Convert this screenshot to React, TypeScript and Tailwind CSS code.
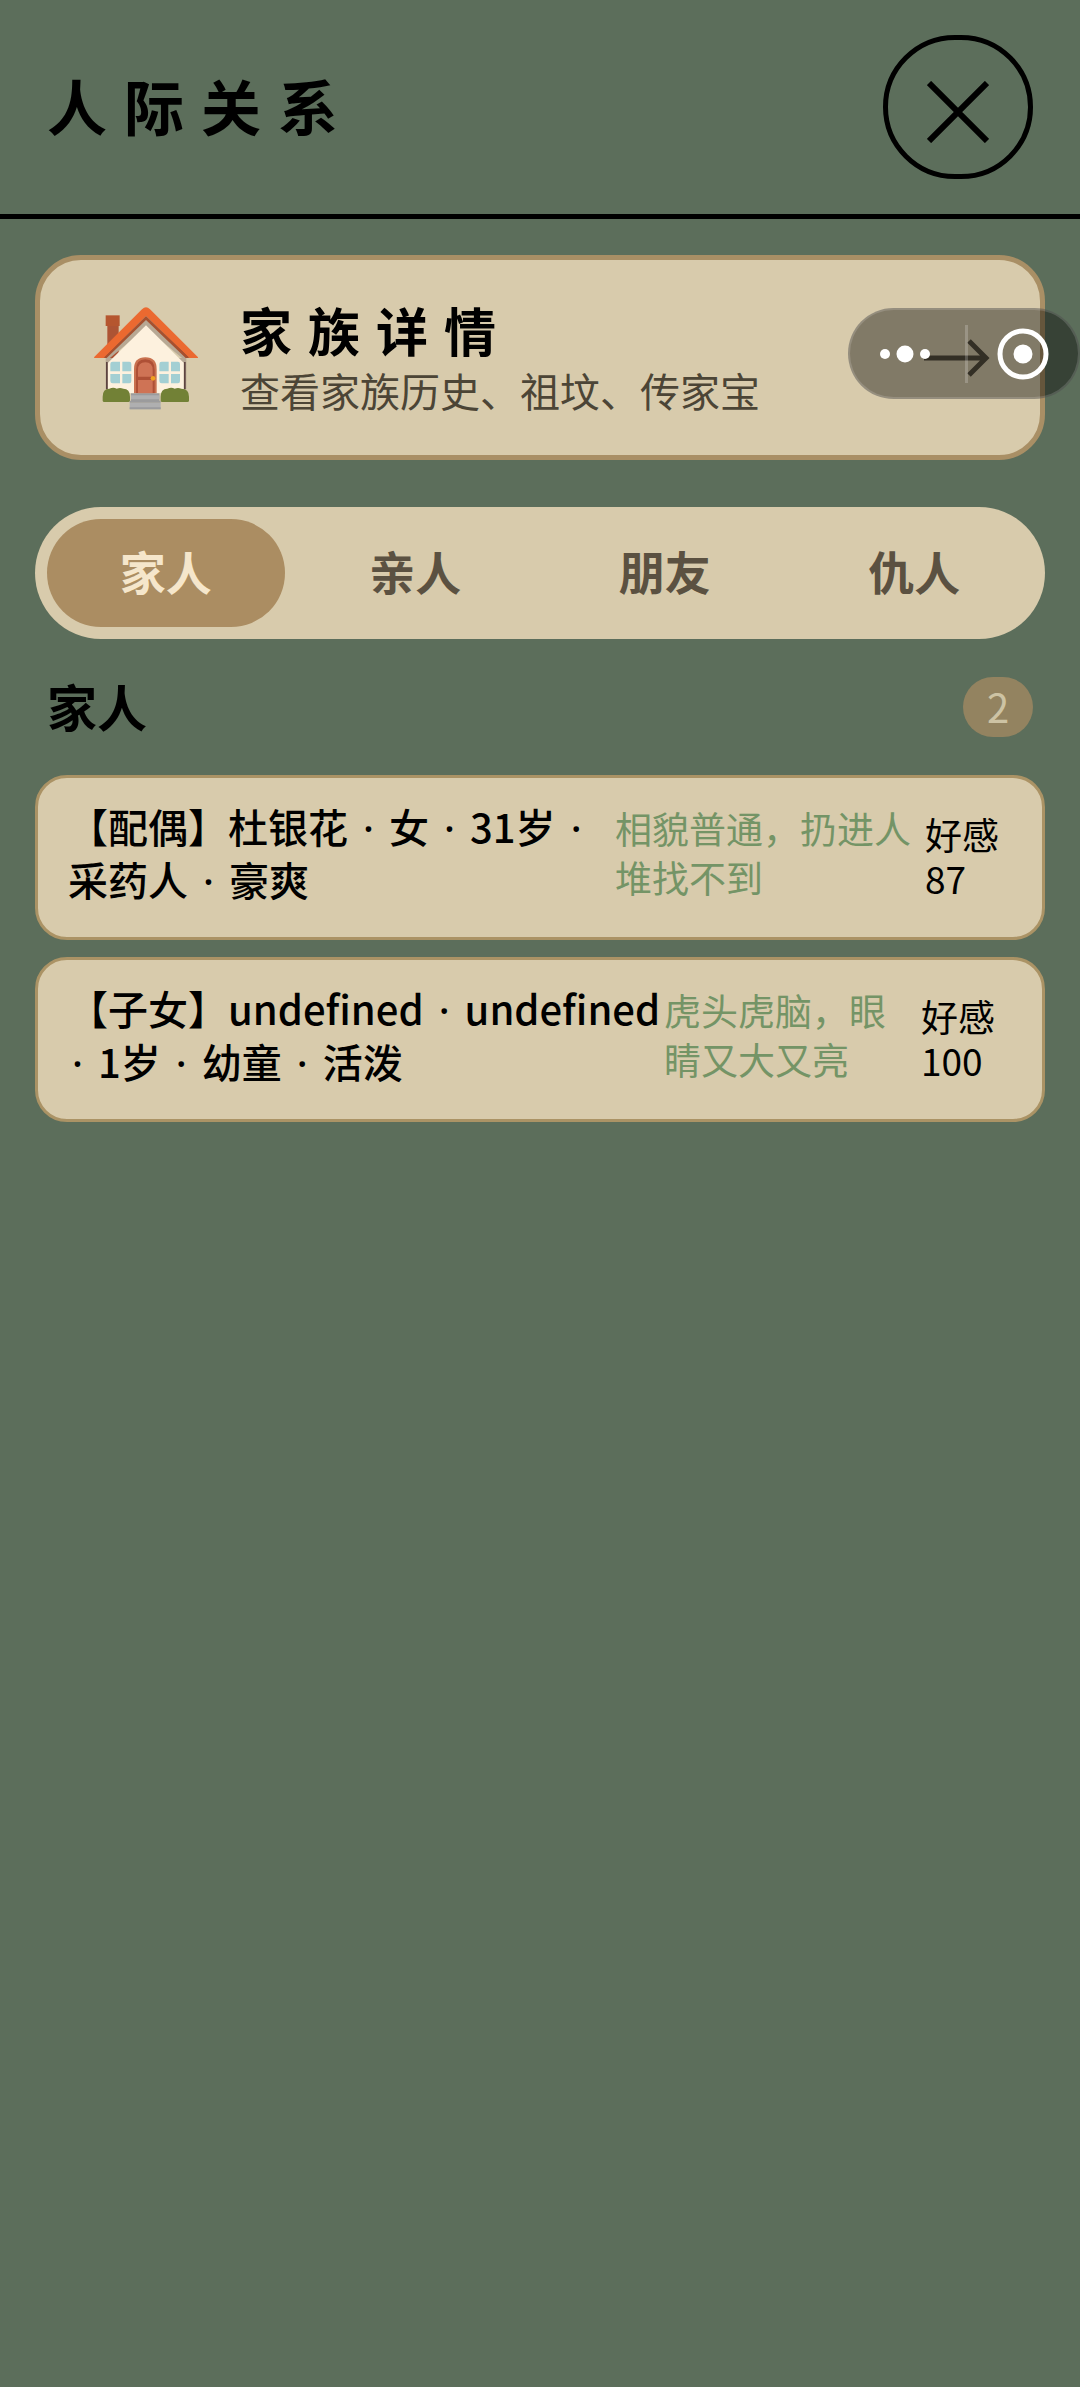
import React, { Fragment, useState } from "react";

type Person = {
  id: number;
  lines: string[][];
  look: string;
  favor: number;
  columns: string;
};

const tabs = ["家人", "亲人", "朋友", "仇人"];

const people: Person[] = [
  {
    id: 1,
    lines: [
      ["【配偶】杜银花", "女", "31岁", ""],
      ["采药人", "豪爽"],
    ],
    look: "相貌普通，扔进人堆找不到",
    favor: 87,
    columns: "grid-cols-[547fr_310fr_87fr]",
  },
  {
    id: 2,
    lines: [
      ["【子女】undefined", "undefined"],
      ["", "1岁", "幼童", "活泼"],
    ],
    look: "虎头虎脑，眼睛又大又亮",
    favor: 100,
    columns: "grid-cols-[596fr_257fr_91fr]",
  },
];

const HouseIcon: React.FC = () => (
  <svg viewBox="42 50 312 312" className="size-[104px] shrink-0" aria-hidden="true">
    {/* chimney */}
    <path d="M82 106h34v100H82z" fill="#ad5434" />
    <path d="M77 78h42v32H77z" fill="#b5562f" />
    {/* walls */}
    <path d="M77 206h242v94H77z" fill="#b7a894" />
    <path d="M78 218h5v82h-5zM312 218h5v82h-5z" fill="#5d4340" />
    <path d="M198 82 78 196v20l120-100 120 100v-20z" fill="#b7a894" />
    <path d="M198 108 84 220v92h227v-92z" fill="#fdf1de" />
    {/* roof */}
    <path d="M198 74 318 200v4h14L198 66 64 204h14z" fill="#a5482c" />
    <path
      d="M42 204 186 60q12-12 24 0l144 144q1 2-2 2h-24L198 80 72 206H44q-2 0-2-2z"
      fill="#eb6930"
    />
    <path d="M198 80 328 206h-11L198 92 80 206h-9z" fill="#a5502f" />
    {/* windows */}
    <g fill="#a3cfd3">
      <path d="M98 217h22v29H91v-22q0-7 7-7zM127 217h21q6 0 6 7v22h-27zM91 254h29v28H98q-7 0-7-7zM127 254h27v21q0 7-6 7h-21z" />
      <path d="M245 217h21v29h-28v-22q0-7 7-7zM273 217h21q6 0 6 7v22h-27zM238 254h28v28h-21q-7 0-7-7zM273 254h27v21q0 7-6 7h-21z" />
    </g>
    {/* door */}
    <path d="M162 312v-73q0-35 34-35t34 35v73z" fill="#c9714f" />
    <path d="M168 312v-70q0-32 28-32t28 32v70z" fill="#ae5036" />
    <path d="M174 262v-20q0-23 22-23t22 23v20zM174 272h44v40h-44z" fill="#cf7355" />
    <circle cx="219" cy="267" r="7" fill="#f0a01f" />
    {/* bushes and steps */}
    <path
      d="M68 334v-12q0-24 20-24 12-5 22 0 10-4 20 0 20 0 20 24v12q0 4-5 4H73q-5 0-5-4zM242 334v-12q0-24 20-24 12-5 22 0 10-4 20 0 23 0 23 24v12q0 4-5 4h-75q-5 0-5-4z"
      fill="#728136"
    />
    <path d="M153 312h85v24h-85z" fill="#9b9b9d" />
    <path d="M153 318h85v12h-85zM149 340h93v20h-93z" fill="#afafb0" />
    <path d="M149 334h93v6h-93zM149 354h93v6h-93z" fill="#9b9b9d" />
  </svg>
);

// Floating mini program menu, sits above the page content
const Capsule: React.FC = () => (
  <div className="absolute top-[308px] right-0 flex h-[91px] w-[232px] items-center rounded-full border-2 border-white/15 bg-black/40">
    <button type="button" aria-label="更多" className="flex h-full flex-1 items-center justify-center pr-1">
      <svg viewBox="0 0 52 20" className="h-5 w-[52px]" fill="#fff">
        <circle cx="6" cy="10" r="5" />
        <circle cx="26" cy="10" r="8.5" />
        <circle cx="46" cy="10" r="5" />
      </svg>
    </button>
    <span className="h-[58px] w-[3px] bg-white/20" />
    <button type="button" aria-label="关闭小程序" className="flex h-full flex-1 items-center justify-center">
      <svg viewBox="0 0 52 52" className="size-[52px]">
        <circle cx="26" cy="26" r="23" fill="none" stroke="#fff" strokeWidth="5" />
        <circle cx="26" cy="26" r="9.5" fill="#fff" />
      </svg>
    </button>
  </div>
);

const Dot: React.FC<{ leading?: boolean }> = ({ leading }) => (
  <span
    className={`mr-[11px] inline-block w-[19px] text-center font-['Noto_Sans',sans-serif] ${
      leading ? "" : "ml-[11px]"
    }`}
  >
    ·
  </span>
);

const PersonCard: React.FC<{ person: Person }> = ({ person }) => (
  <li
    className={`grid min-h-[165px] rounded-[32px] border-[3px] border-[#ab9365] bg-[#d8cbac] px-[30px] pt-[22px] ${person.columns}`}
  >
    <div className="text-[40px] leading-[53px] font-medium whitespace-nowrap">
      {person.lines.map((parts, i) => (
        <p key={i} className="h-[53px]">
          {parts.map((part, j) => (
            <Fragment key={j}>
              {j > 0 && <Dot leading={parts[j - 1] === ""} />}
              {part}
            </Fragment>
          ))}
        </p>
      ))}
    </div>
    <p className="pt-1 text-[37px] leading-[49px] text-[#749466]">{person.look}</p>
    <p className="pt-3 text-[37px] leading-[44px]">
      好感
      <br />
      {person.favor}
    </p>
  </li>
);

const App: React.FC = () => {
  const [active, setActive] = useState(tabs[0]);

  return (
    <div
      lang="zh-CN"
      className="relative min-h-screen bg-[#5c6e5b] font-['Noto_Sans_CJK_SC',sans-serif] text-black"
    >
      <header className="flex items-center justify-between border-b-[5px] border-black px-[47px] py-[35px]">
        <h1 className="pb-1 text-[60px] leading-[72px] font-bold tracking-[17px]">人际关系</h1>
        <button
          type="button"
          aria-label="关闭"
          className="flex h-[144px] w-[150px] items-center justify-center rounded-full border-[5px] border-black pt-2.5"
        >
          <svg viewBox="0 0 62 62" className="size-[62px]" stroke="#000" strokeWidth="6">
            <path d="M2 2l58 58M60 2L2 60" />
          </svg>
        </button>
      </header>

      <main className="px-[35px] pt-9">
        <a
          href="#family"
          className="flex h-[205px] items-center rounded-[46px] border-[5px] border-[#a98f65] bg-[#d8cbac] pr-[50px] pl-[54px]"
        >
          <HouseIcon />
          <div className="ml-[42px] flex-1">
            <h2 className="text-[52px] leading-[64px] font-bold tracking-[16px]">家族详情</h2>
            <p className="text-[40px] leading-[56px] text-[#4c4536]">查看家族历史、祖坟、传家宝</p>
          </div>
          <svg viewBox="0 0 66 40" className="h-10 w-[66px]" fill="none" stroke="#564f3f" strokeWidth="5">
            <path d="M0 20h62M45 3l17 17-17 17" />
          </svg>
        </a>

        <nav className="mt-[47px] flex gap-3 rounded-full bg-[#d8cbac] p-3">
          {tabs.map((tab) => (
            <button
              key={tab}
              type="button"
              onClick={() => setActive(tab)}
              className={`h-[108px] flex-1 rounded-full pb-1.5 text-[46px] leading-[60px] font-bold ${
                tab === active ? "bg-[#ab8d62] text-[#f5e6cb]" : "text-[#5b5141]"
              }`}
            >
              {tab}
            </button>
          ))}
        </nav>

        <div className="mt-9 flex items-center justify-between px-3">
          <h3 className="pb-1 text-[50px] leading-[60px] font-bold">{active}</h3>
          <span className="flex h-[60px] w-[70px] items-center justify-center rounded-full bg-[#938360] pb-0.5 text-[40px] text-[#cdc3a4]">
            {people.length}
          </span>
        </div>

        <ul className="mt-9 flex flex-col gap-[17px]">
          {people.map((person) => (
            <PersonCard key={person.id} person={person} />
          ))}
        </ul>
      </main>

      <Capsule />
    </div>
  );
};

export default App;
